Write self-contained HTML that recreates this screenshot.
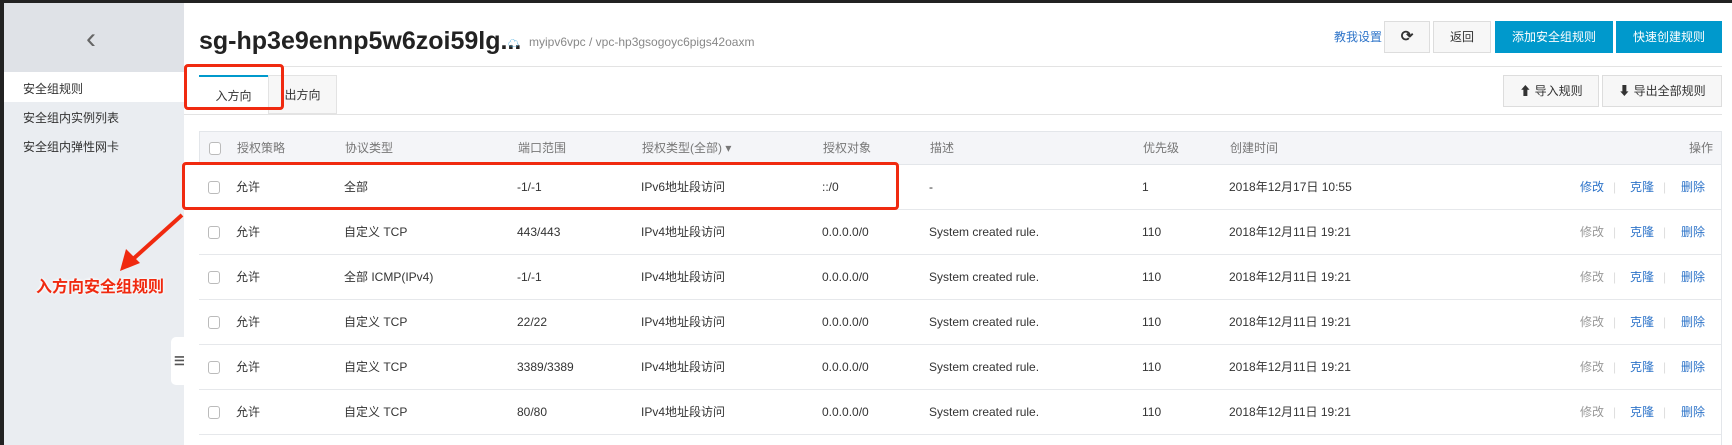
<!DOCTYPE html>
<html><head><meta charset="utf-8"><style>
*{margin:0;padding:0;box-sizing:border-box}
body{width:1732px;height:445px;overflow:hidden;background:#fff;font-family:"Liberation Sans","Noto Sans CJK SC",sans-serif;font-size:12px;color:#333;position:relative}
.a{position:absolute}
.side{left:4px;top:3px;width:180px;height:442px;background:#eaedf1}
.btn{position:absolute;border:1px solid #ddd;background:#f7f7f7;text-align:center;font-size:12px;color:#333}
.pb{position:absolute;background:#0099cc;color:#fff;text-align:center;font-size:12px;line-height:32px;top:21px;height:32px}
.row{position:absolute;left:199px;width:1523px;height:45px;border-bottom:1px solid #e6e8eb;line-height:44px}
.row span,.hd span{position:absolute;white-space:nowrap}
.cb{width:12px;height:13px;border:1px solid #bbb;border-radius:3px;background:#fff;top:16px;left:9px}
.hd{position:absolute;left:199px;top:131px;width:1523px;height:34px;background:#f4f5f8;border:1px solid #e3e6ea;line-height:32px;color:#777}
.l{color:#2e74c9}.g{color:#999}.sep{color:#ddd}
</style></head><body>
<div class="a" style="left:0;top:0;width:1732px;height:3px;background:#222"></div>
<div class="a" style="left:0;top:0;width:4px;height:445px;background:#222"></div>
<div class="a side"></div>
<div class="a" style="left:4px;top:3px;width:180px;height:69px;background:#dfe2e7"></div>
<div class="a" style="left:86px;top:24px;font-size:30px;color:#666;line-height:30px">&#8249;</div>
<div class="a" style="left:4px;top:72px;width:180px;height:30px;background:#fff"></div>
<div class="a" style="left:23px;top:80px;font-size:12px">安全组规则</div>
<div class="a" style="left:23px;top:109px;font-size:12px">安全组内实例列表</div>
<div class="a" style="left:23px;top:138px;font-size:12px">安全组内弹性网卡</div>
<div class="a" style="left:171px;top:337px;width:14px;height:48px;background:#fff;border-radius:5px 0 0 5px"></div>
<div class="a" style="left:174px;top:354px;font-size:12px;color:#555;font-weight:bold">&#9776;</div>

<div class="a" style="left:199px;top:27px;font-size:25px;font-weight:bold;color:#222">sg-hp3e9ennp5w6zoi59lg...</div>
<div class="a" style="left:508px;top:35px;color:#2e9fd8;font-size:11px">&#9729;</div>
<div class="a" style="left:529px;top:35px;color:#888;font-size:12px">myipv6vpc / vpc-hp3gsogoyc6pigs42oaxm</div>
<div class="a l" style="left:1334px;top:28px">教我设置</div>
<div class="btn" style="left:1384px;top:21px;width:46px;height:32px;line-height:30px;font-size:15px;font-weight:bold">&#10227;</div>
<div class="btn" style="left:1433px;top:21px;width:58px;height:32px;line-height:30px">返回</div>
<div class="pb" style="left:1495px;width:118px">添加安全组规则</div>
<div class="pb" style="left:1616px;width:106px">快速创建规则</div>
<div class="a" style="left:184px;top:66px;width:1538px;height:1px;background:#e3e3e3"></div>

<div class="a" style="left:199px;top:75px;width:69px;height:40px;border-top:2px solid #0099cc;background:#fff;text-align:center;line-height:38px">入方向</div>
<div class="a" style="left:268px;top:75px;width:69px;height:39px;border:1px solid #e3e3e3;background:#f7f7f7;text-align:center;line-height:38px">出方向</div>
<div class="btn" style="left:1503px;top:75px;width:96px;height:32px;line-height:30px">&#11014; 导入规则</div>
<div class="btn" style="left:1602px;top:75px;width:120px;height:32px;line-height:30px">&#11015; 导出全部规则</div>
<div class="a" style="left:184px;top:114px;width:1538px;height:1px;background:#e3e3e3"></div>

<div class="hd"><div class="a cb" style="top:10px"></div>
<span style="left:37px">授权策略</span><span style="left:145px">协议类型</span><span style="left:318px">端口范围</span><span style="left:442px">授权类型(全部) &#9662;</span><span style="left:623px">授权对象</span><span style="left:730px">描述</span><span style="left:943px">优先级</span><span style="left:1030px">创建时间</span><span style="right:8px">操作</span></div>

<div class="row" style="top:165px"><div class="a cb"></div><span style="left:37px">允许</span><span style="left:145px">全部</span><span style="left:318px">-1/-1</span><span style="left:442px">IPv6地址段访问</span><span style="left:623px">::/0</span><span style="left:730px">-</span><span style="left:943px">1</span><span style="left:1030px">2018年12月17日 10:55</span><span style="left:1381px" class="l">修改</span><span style="left:1414px" class="sep">|</span><span style="left:1431px" class="l">克隆</span><span style="left:1464px" class="sep">|</span><span style="left:1482px" class="l">删除</span></div>
<div class="row" style="top:210px"><div class="a cb"></div><span style="left:37px">允许</span><span style="left:145px">自定义 TCP</span><span style="left:318px">443/443</span><span style="left:442px">IPv4地址段访问</span><span style="left:623px">0.0.0.0/0</span><span style="left:730px">System created rule.</span><span style="left:943px">110</span><span style="left:1030px">2018年12月11日 19:21</span><span style="left:1381px" class="g">修改</span><span style="left:1414px" class="sep">|</span><span style="left:1431px" class="l">克隆</span><span style="left:1464px" class="sep">|</span><span style="left:1482px" class="l">删除</span></div>
<div class="row" style="top:255px"><div class="a cb"></div><span style="left:37px">允许</span><span style="left:145px">全部 ICMP(IPv4)</span><span style="left:318px">-1/-1</span><span style="left:442px">IPv4地址段访问</span><span style="left:623px">0.0.0.0/0</span><span style="left:730px">System created rule.</span><span style="left:943px">110</span><span style="left:1030px">2018年12月11日 19:21</span><span style="left:1381px" class="g">修改</span><span style="left:1414px" class="sep">|</span><span style="left:1431px" class="l">克隆</span><span style="left:1464px" class="sep">|</span><span style="left:1482px" class="l">删除</span></div>
<div class="row" style="top:300px"><div class="a cb"></div><span style="left:37px">允许</span><span style="left:145px">自定义 TCP</span><span style="left:318px">22/22</span><span style="left:442px">IPv4地址段访问</span><span style="left:623px">0.0.0.0/0</span><span style="left:730px">System created rule.</span><span style="left:943px">110</span><span style="left:1030px">2018年12月11日 19:21</span><span style="left:1381px" class="g">修改</span><span style="left:1414px" class="sep">|</span><span style="left:1431px" class="l">克隆</span><span style="left:1464px" class="sep">|</span><span style="left:1482px" class="l">删除</span></div>
<div class="row" style="top:345px"><div class="a cb"></div><span style="left:37px">允许</span><span style="left:145px">自定义 TCP</span><span style="left:318px">3389/3389</span><span style="left:442px">IPv4地址段访问</span><span style="left:623px">0.0.0.0/0</span><span style="left:730px">System created rule.</span><span style="left:943px">110</span><span style="left:1030px">2018年12月11日 19:21</span><span style="left:1381px" class="g">修改</span><span style="left:1414px" class="sep">|</span><span style="left:1431px" class="l">克隆</span><span style="left:1464px" class="sep">|</span><span style="left:1482px" class="l">删除</span></div>
<div class="row" style="top:390px"><div class="a cb"></div><span style="left:37px">允许</span><span style="left:145px">自定义 TCP</span><span style="left:318px">80/80</span><span style="left:442px">IPv4地址段访问</span><span style="left:623px">0.0.0.0/0</span><span style="left:730px">System created rule.</span><span style="left:943px">110</span><span style="left:1030px">2018年12月11日 19:21</span><span style="left:1381px" class="g">修改</span><span style="left:1414px" class="sep">|</span><span style="left:1431px" class="l">克隆</span><span style="left:1464px" class="sep">|</span><span style="left:1482px" class="l">删除</span></div>
<div class="a" style="left:1721px;top:131px;width:1px;height:314px;background:#e3e6ea"></div>

<div class="a" style="left:184px;top:64px;width:100px;height:46px;border:3px solid #f02a10;border-radius:4px"></div>
<div class="a" style="left:182px;top:162px;width:717px;height:48px;border:3px solid #f02a10;border-radius:4px"></div>
<svg class="a" style="left:110px;top:205px" width="80" height="70"><line x1="72" y1="10" x2="22" y2="55" stroke="#f02a10" stroke-width="4"/><polygon points="10,66 16,44 30,58" fill="#f02a10"/></svg>
<div class="a" style="left:36px;top:273px;font-size:16px;font-weight:bold;color:#f02a10;text-shadow:0 0 3px #fff,0 0 3px #fff">入方向安全组规则</div>
</body></html>
